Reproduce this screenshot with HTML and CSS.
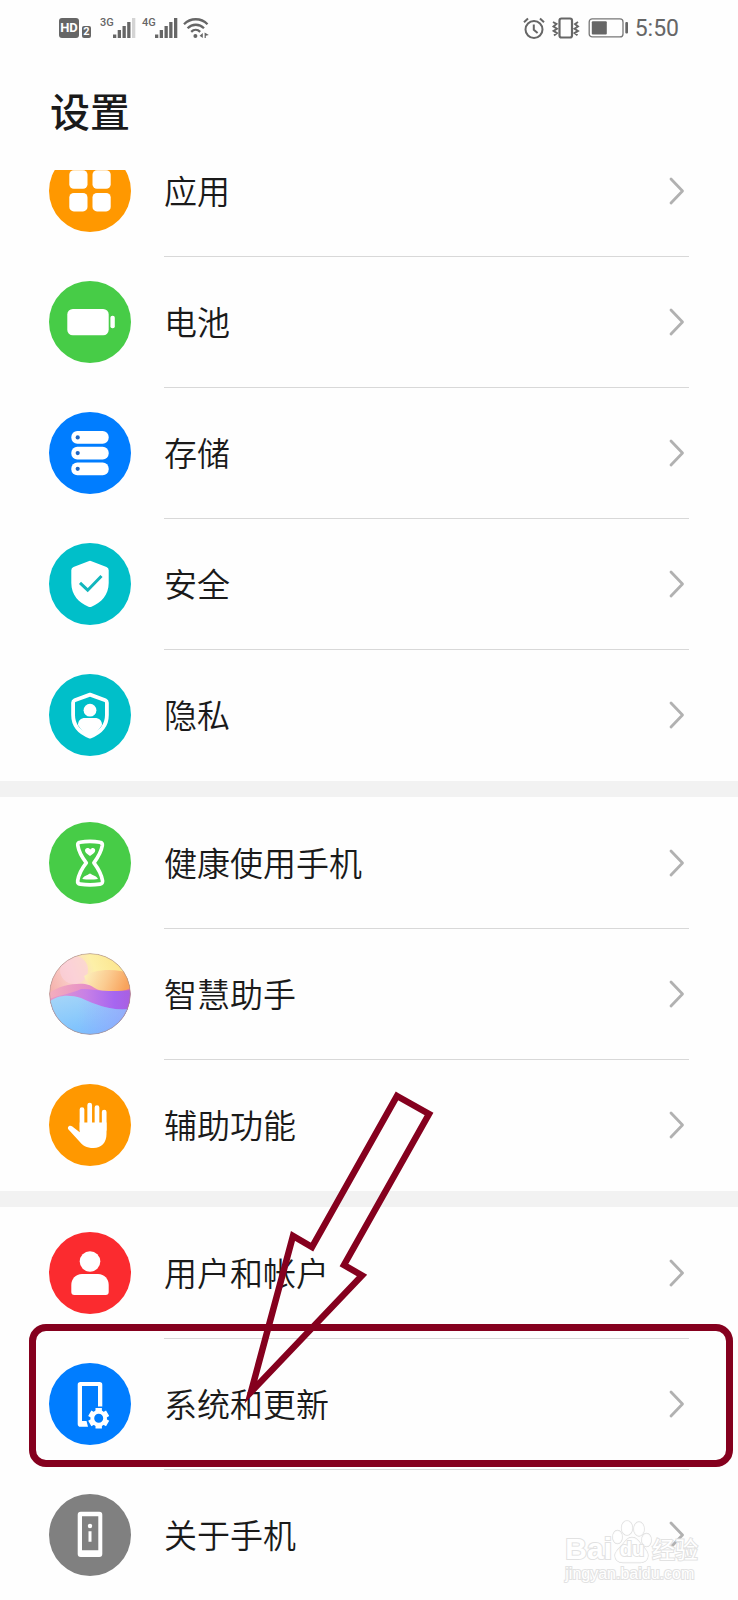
FILE: index.html
```html
<!DOCTYPE html>
<html lang="zh-CN">
<head>
<meta charset="utf-8">
<meta name="viewport" content="width=device-width, initial-scale=1">
<title>设置</title>
<link rel="stylesheet" href="styles.css">
</head>
<body>
<svg class="defs" width="0" height="0" aria-hidden="true">
  <symbol id="chevron" viewBox="0 0 16 28"><path d="M2 2 13.500 14 2 26" fill="none" stroke="#b1b1b1" stroke-width="2.800" stroke-linecap="round" stroke-linejoin="round"/></symbol>
</svg>
<div class="screen">
  <div class="status">
    <div class="status-left">
      <span class="hd">HD</span>
      <span class="sim">2</span>
      <span class="net">3G</span>
      <svg class="signal" width="23" height="20" viewBox="0 0 23 20"><path d="M0 16.500h3.300V20H0zM4.700 12H8v8H4.700zM9.500 8h3.300v12H9.500zM14.200 4h3.300v16h-3.300z" fill="#666"/><path d="M19 0h3.300v20H19z" fill="#d4d4d4"/></svg>
      <span class="net net-second">4G</span>
      <svg class="signal" width="23" height="20" viewBox="0 0 23 20"><path d="M0 16.500h3.300V20H0zM4.700 12H8v8H4.700zM9.500 8h3.300v12H9.500zM14.200 4h3.300v16h-3.300zM19 0h3.300v20H19z" fill="#666"/></svg>
      <svg class="wifi" width="26" height="20" viewBox="0 0 26 20"><g fill="none" stroke="#666" stroke-width="2.300"><path d="M1 6.200c6.500-6.600 17-6.600 23.500 0"/><path d="M4.600 10.200c4.600-4.600 11.800-4.600 16.400 0"/><path d="M8.200 13.800c2.600-2.500 6.400-2.500 9 0"/></g><circle cx="12.400" cy="18" r="2" fill="#666"/><path d="M19.800 15v5l-3.200-2.200zM21.600 14.500v5.500h1.200v-2.200l3-.8z" fill="#666"/></svg>
    </div>
    <div class="status-right">
      <svg width="22" height="22" viewBox="0 0 22 22" fill="none" stroke="#666" stroke-width="2"><circle cx="11" cy="12.500" r="8.500"/><path d="M10.800 7.500v5.200l3.800 3.300M1 5.200l4-3.700M21 5.200l-4-3.700"/></svg>
      <svg width="28" height="22" viewBox="0 0 28 22" fill="none" stroke="#666"><rect x="7.500" y="1.500" width="12.500" height="19" rx="2" stroke-width="2.200"/><path d="M1 5l3.500 2L1.500 9.500l3.500 2.200-3.500 2.200 3.500 2.200L2 18.500M26 5 23 7l3 2.500-3.500 2.200 3.500 2.200-3.500 2.200 3 2.200" stroke-width="1.900"/></svg>
      <svg width="41" height="20" viewBox="0 0 41 20"><rect x="2.200" y=".9" width="33.800" height="18" rx="3" fill="none" stroke="#777" stroke-width="1.300"/><rect x="4.800" y="3.200" width="15" height="13.400" rx="1" fill="#666"/><rect x="38.300" y="4" width="2.700" height="11.500" rx="1" fill="#666"/></svg>
      <span class="clock">5:50</span>
    </div>
  </div>

  <header class="header"><h1>设置</h1></header>

  <main>
    <nav class="group group-scrolled">
      <a class="row" href="#apps">
        <svg class="icon orange" viewBox="0 0 82 82" fill="#fff"><rect x="20.300" y="20.300" width="18.200" height="18.400" rx="4.500"/><rect x="43.500" y="20.300" width="18.200" height="18.400" rx="4.500"/><rect x="20.300" y="43" width="18.200" height="18.400" rx="4.500"/><rect x="43.500" y="43" width="18.200" height="18.400" rx="4.500"/></svg>
        <span class="body"><span class="label">应用</span><svg class="chevron"><use href="#chevron"/></svg></span>
      </a>
      <a class="row" href="#battery">
        <svg class="icon green" viewBox="0 0 82 82" fill="#fff"><rect x="18.300" y="28" width="41.400" height="26.300" rx="5.500"/><rect x="61.400" y="34.800" width="4.400" height="12.400" rx="2"/></svg>
        <span class="body"><span class="label">电池</span><svg class="chevron"><use href="#chevron"/></svg></span>
      </a>
      <a class="row" href="#storage">
        <svg class="icon blue" viewBox="0 0 82 82" fill="#fff"><rect x="22.300" y="19" width="37.400" height="12.800" rx="6"/><rect x="22.300" y="34.700" width="37.400" height="12.800" rx="6"/><rect x="22.300" y="50.400" width="37.400" height="12.800" rx="6"/><g fill="#1f66c4"><circle cx="28.700" cy="25.400" r="2.100"/><circle cx="28.700" cy="41.100" r="2.100"/><circle cx="28.700" cy="56.800" r="2.100"/></g></svg>
        <span class="body"><span class="label">存储</span><svg class="chevron"><use href="#chevron"/></svg></span>
      </a>
      <a class="row" href="#security">
        <svg class="icon teal" viewBox="0 0 82 82"><path d="M39.500 18.200q1.500-.7 3 0L57.500 24q2.200 1 2.200 3.300V40c0 12-7.700 20-17.200 23.700q-1.500.6-3 0C30 60 22.300 52 22.300 40V27.300q0-2.300 2.200-3.300z" fill="#fff"/><path d="M31 39.800 38.700 47.200 52.500 33" fill="none" stroke="#12b6bd" stroke-width="3"/></svg>
        <span class="body"><span class="label">安全</span><svg class="chevron"><use href="#chevron"/></svg></span>
      </a>
      <a class="row" href="#privacy">
        <svg class="icon teal" viewBox="0 0 82 82"><path d="M41 20.600 56.300 26.300q1.600.7 1.600 2.400V41c0 10.500-6.800 17.800-16.900 21.600C30.900 58.800 24.100 51.500 24.100 41V28.700q0-1.700 1.600-2.400z" fill="none" stroke="#fff" stroke-width="3.800" stroke-linejoin="round"/><circle cx="41" cy="36.200" r="6.400" fill="#fff"/><path d="M29 51c0-4.500 3-7 7-7h10c4 0 7 2.500 7 7-3 5-7 9-12 11.500C36 60 32 56 29 51z" fill="#fff"/></svg>
        <span class="body"><span class="label">隐私</span><svg class="chevron"><use href="#chevron"/></svg></span>
      </a>
    </nav>

    <nav class="group">
      <a class="row" href="#digital-balance">
        <svg class="icon green" viewBox="0 0 82 82"><path d="M31 20.300q-2.700.4-2.200 3.200C30 31 33.500 36 37.300 40.800 33.500 45.500 30 51 28.700 58.500q-.4 3.300 2.600 3.700 9.700 1.400 19.700 0 3-.4 2.500-3.700C52.200 51 48.500 45.500 44.900 40.800 48.500 36 52 31 53.300 23.500q.4-2.800-2.300-3.200-10-2-20 0z" fill="none" stroke="#fff" stroke-width="3.700" stroke-linejoin="round"/><path d="M41 34c-3-1.700-5-3.500-5-5.400 0-2.800 3.500-3.400 5.200-1 1.700-2.500 5.200-1.800 5 1-.1 1.900-2.200 3.700-5.200 5.400zM33.300 57c1.500-3.200 5-3.700 7.700-5.500 2.500 1.800 6.500 2.300 8 5.500q-8 1.200-15.700 0z" fill="#fff"/></svg>
        <span class="body"><span class="label">健康使用手机</span><svg class="chevron"><use href="#chevron"/></svg></span>
      </a>
      <a class="row" href="#assistant">
        <svg class="icon" viewBox="0 0 82 82">
          <defs>
            <clipPath id="orb"><circle cx="41" cy="41" r="40.500"/></clipPath>
            <linearGradient id="sky" x1="0" y1=".4" x2="1" y2="0"><stop offset="0" stop-color="#f5b2ac"/><stop offset=".3" stop-color="#fbd3cf"/><stop offset=".55" stop-color="#fdf0a8"/><stop offset="1" stop-color="#fbe080"/></linearGradient>
            <linearGradient id="sun" x1="0" y1="0" x2="1" y2=".2"><stop offset="0" stop-color="#fcf3c0"/><stop offset=".55" stop-color="#fbcb90"/><stop offset="1" stop-color="#f8a35c"/></linearGradient>
            <linearGradient id="rose" x1="0" y1="0" x2="1" y2="0"><stop offset="0" stop-color="#f3aebd"/><stop offset=".5" stop-color="#e58cc8"/><stop offset="1" stop-color="#e0709c"/></linearGradient>
            <linearGradient id="violet" x1="0" y1="0" x2="1" y2="0"><stop offset="0" stop-color="#e89ac8"/><stop offset=".45" stop-color="#c780e6"/><stop offset=".8" stop-color="#a666f0"/><stop offset="1" stop-color="#a95fe0"/></linearGradient>
            <linearGradient id="sea" x1=".2" y1="0" x2=".7" y2="1"><stop offset="0" stop-color="#a3d4f8"/><stop offset=".45" stop-color="#8ecbfb"/><stop offset="1" stop-color="#74bcff"/></linearGradient>
            <linearGradient id="sea-edge" x1="0" y1="0" x2="1" y2="0"><stop offset=".35" stop-color="#a79cff" stop-opacity="0"/><stop offset="1" stop-color="#9aa0fa" stop-opacity=".7"/></linearGradient>
          </defs>
          <g clip-path="url(#orb)">
            <path d="M0 0h82v82H0z" fill="url(#sky)"/>
            <circle cx="25" cy="17" r="14" fill="#fbd0dc" fill-opacity=".7"/>
            <path d="M0 40C10 33 24 30 36 31c14 4 30 8 46 2v36H0z" fill="url(#rose)"/>
            <path d="M35 23c8-4 14-6 25-6 8 0 16 1 22 4v14c-8 4-18 5-27 3.500-10-2-18-8.500-20-15.500z" fill="url(#sun)"/>
            <path d="M0 46C10 42 22 41 32 36c14 0 26 4 50 1v28H0z" fill="url(#violet)"/>
            <path d="M0 49c8-7 20-8 32-4 18 8 30 13 50 11v26H0z" fill="url(#sea)"/>
            <path d="M0 49c8-7 20-8 32-4 18 8 30 13 50 11v26H0z" fill="url(#sea-edge)"/>
          </g>
          <circle cx="41" cy="41" r="40.400" fill="none" stroke="#a88a86" stroke-opacity=".7"/>
        </svg>
        <span class="body"><span class="label">智慧助手</span><svg class="chevron"><use href="#chevron"/></svg></span>
      </a>
      <a class="row" href="#accessibility">
        <svg class="icon orange" viewBox="0 0 82 82"><g stroke="#fff" stroke-width="4.700" stroke-linecap="round"><path d="M33 25.500V46M40.700 21V46M48 23.500V46M55.200 28V46"/></g><path d="M30.700 38.500H57.500V50c0 8.500-5 14-13 14-7 0-11-2.500-14.500-7L19.500 45.500c-1.800-2.500 1-5 3.500-3.300l7.700 6z" fill="#fff"/></svg>
        <span class="body"><span class="label">辅助功能</span><svg class="chevron"><use href="#chevron"/></svg></span>
      </a>
    </nav>

    <nav class="group">
      <a class="row" href="#users">
        <svg class="icon red" viewBox="0 0 82 82" fill="#fff"><circle cx="41" cy="29.500" r="10.300"/><path d="M33 42h16c6.500 0 10.700 5 10.700 11v7q0 3-3 3H25.300q-3 0-3-3v-7c0-6 4.200-11 10.700-11z"/></svg>
        <span class="body"><span class="label">用户和帐户</span><svg class="chevron"><use href="#chevron"/></svg></span>
      </a>
      <a class="row row-marked" href="#system">
        <svg class="icon blue" viewBox="0 0 82 82"><path d="M31.500 19h19q2.800 0 2.800 2.800V43.500H49V23H33v35h4.500l1.500 5.700h-7.500q-2.800 0-2.800-2.800V21.800q0-2.800 2.800-2.800z" fill="#fff"/><circle cx="49.700" cy="55.300" r="6.400" fill="none" stroke="#fff" stroke-width="3.800"/><g fill="#fff"><path id="tooth" d="M46.500 45h6.400v4h-6.400zM46.500 61.600h6.400v4h-6.400z"/><use href="#tooth" transform="rotate(60 49.700 55.300)"/><use href="#tooth" transform="rotate(120 49.700 55.300)"/></g></svg>
        <span class="body"><span class="label">系统和更新</span><svg class="chevron"><use href="#chevron"/></svg></span>
        <span class="mark-frame"></span>
        <svg class="mark-arrow" width="220" height="340" viewBox="0 0 220 340"><path d="M167 16 199 34 114 185 132 195.500 21 312 63 156 82 167z" fill="none" stroke="#85001e" stroke-width="6.500" stroke-miterlimit="10"/></svg>
      </a>
      <a class="row" href="#about">
        <svg class="icon gray" viewBox="0 0 82 82"><path fill-rule="evenodd" d="M31.700 17.700h18.600q3 0 3 3V60q0 3-3 3H31.700q-3 0-3-3V20.700q0-3 3-3zM33 22.300v34h16.300v-34z" fill="#fff"/><circle cx="41" cy="32" r="2.200" fill="#fff"/><path d="M39.500 37.200h3v10.600h-3z" fill="#fff"/></svg>
        <span class="body"><span class="label">关于手机</span><svg class="chevron"><use href="#chevron"/></svg></span>
      </a>
    </nav>
  </main>

  <div class="watermark">
    <div class="brand">
      <span class="brand-latin">Bai</span>
      <span class="paw"><svg width="40" height="44" viewBox="0 0 40 44" fill="#fff" fill-opacity=".8" stroke="#dedede" stroke-width="1.300"><ellipse cx="5.500" cy="17" rx="4.800" ry="6.500"/><ellipse cx="15" cy="8" rx="5.500" ry="7.200"/><ellipse cx="27" cy="9" rx="5.200" ry="7"/><ellipse cx="34.500" cy="20" rx="4.800" ry="6.500"/><path d="M20 17.500c5 0 7 4 10 8 3 3 6 6 6 10 0 5-4 7-8 7H11c-5 0-8-3-8-7 0-4 4-7 7-10 3-4 5-8 10-8z"/></svg><span class="paw-text">du</span></span>
      <span class="brand-cn">经验</span>
    </div>
    <div class="site">jingyan.baidu.com</div>
  </div>
</div>
</body>
</html>
```
FILE: styles.css
```css
* {
  box-sizing: border-box;
}

body {
  margin: 0;
  background: #fefefe;
  color: #1a1a1a;
  font-family: Roboto, "Noto Sans CJK SC", sans-serif;
}

.defs {
  position: absolute;
}

.screen {
  position: relative;
  overflow: hidden;
}

/* status bar */

.status {
  display: flex;
  justify-content: space-between;
  align-items: center;
  height: 56px;
  padding: 0 59px;
  color: #666;
}

.status-left {
  display: flex;
  align-items: flex-end;
  height: 20px;
}

.hd {
  width: 20px;
  height: 20px;
  border-radius: 3px;
  background: #666;
  color: #fff;
  font-size: 13px;
  font-weight: 700;
  line-height: 20px;
  text-align: center;
}

.sim {
  width: 9px;
  height: 12px;
  margin-left: 3px;
  border-radius: 2px;
  background: #666;
  color: #fff;
  font-size: 11px;
  font-weight: 700;
  line-height: 12px;
  text-align: center;
}

.net {
  align-self: flex-start;
  width: 12px;
  margin-left: 9px;
  font-size: 11px;
  font-weight: 500;
  line-height: 10px;
  white-space: nowrap;
}

.net-second {
  margin-left: 6px;
}

.signal {
  margin-left: 1px;
}

.wifi {
  margin-left: 5px;
}

.status-right {
  display: flex;
  align-items: center;
  gap: 7px;
}

.clock {
  padding-top: 2px;
  font-size: 23px;
  line-height: 24px;
}

/* header */

.header {
  display: flex;
  align-items: center;
  height: 114px;
  padding: 2px 50px 0;
}

.header h1 {
  margin: 0;
  font-size: 40px;
  font-weight: 500;
  line-height: 56px;
}

/* list */

.group {
  padding: 1px 0;
}

.group + .group {
  border-top: 16px solid #f2f2f2;
}

.group:last-child {
  padding-bottom: 0;
}

.group-scrolled {
  padding-top: 0;
  overflow: hidden;
}

.group-scrolled .row:first-child {
  margin-top: -44px;
}

.row {
  position: relative;
  display: flex;
  align-items: center;
  gap: 33px;
  height: 131px;
  padding: 0 49px;
  color: inherit;
  text-decoration: none;
}

.row:last-child {
  height: 130px;
}

.body {
  display: flex;
  flex: 1;
  align-items: center;
  justify-content: space-between;
  height: 100%;
  padding-right: 4px;
  border-bottom: 1px solid #d8d8d8;
}

.row:last-child .body {
  border-bottom: 0;
}

.label {
  padding-top: 4px;
  font-size: 33px;
  font-weight: 350;
  line-height: 48px;
}

.chevron {
  width: 16px;
  height: 28px;
}

.icon {
  flex: none;
  width: 82px;
  height: 82px;
  margin-bottom: 2px;
  border-radius: 50%;
}

.row:last-child .icon {
  margin-bottom: 0;
}

.orange { background: #ff9800; }
.green { background: #47cc47; }
.blue { background: #007dff; }
.teal { background: #00bfc9; }
.red { background: #fb2b2f; }
.gray { background: #808080; }

/* callout over the marked row */

.mark-frame {
  position: absolute;
  inset: -15px 5px 3px 29px;
  border: 7px solid #85001e;
  border-radius: 17px;
}

.mark-arrow {
  position: absolute;
  top: -259px;
  left: 230px;
  pointer-events: none;
}

/* watermark */

.watermark {
  position: absolute;
  right: 40px;
  bottom: 16px;
  color: #fff;
  font-family: "Liberation Sans", "Noto Sans CJK SC", sans-serif;
  -webkit-text-stroke: 2px #e2e2e2;
  paint-order: stroke fill;
  pointer-events: none;
}

.brand {
  display: flex;
  align-items: flex-end;
}

.brand-latin {
  font-size: 30px;
  font-weight: 700;
  line-height: 30px;
}

.paw {
  position: relative;
  display: flex;
}

.paw-text {
  position: absolute;
  inset: auto 0 4px;
  font-size: 20px;
  font-weight: 700;
  line-height: 22px;
  text-align: center;
}

.brand-cn {
  font-size: 23px;
  font-weight: 400;
  line-height: 28px;
}

.site {
  font-size: 16px;
  line-height: 20px;
}
```
